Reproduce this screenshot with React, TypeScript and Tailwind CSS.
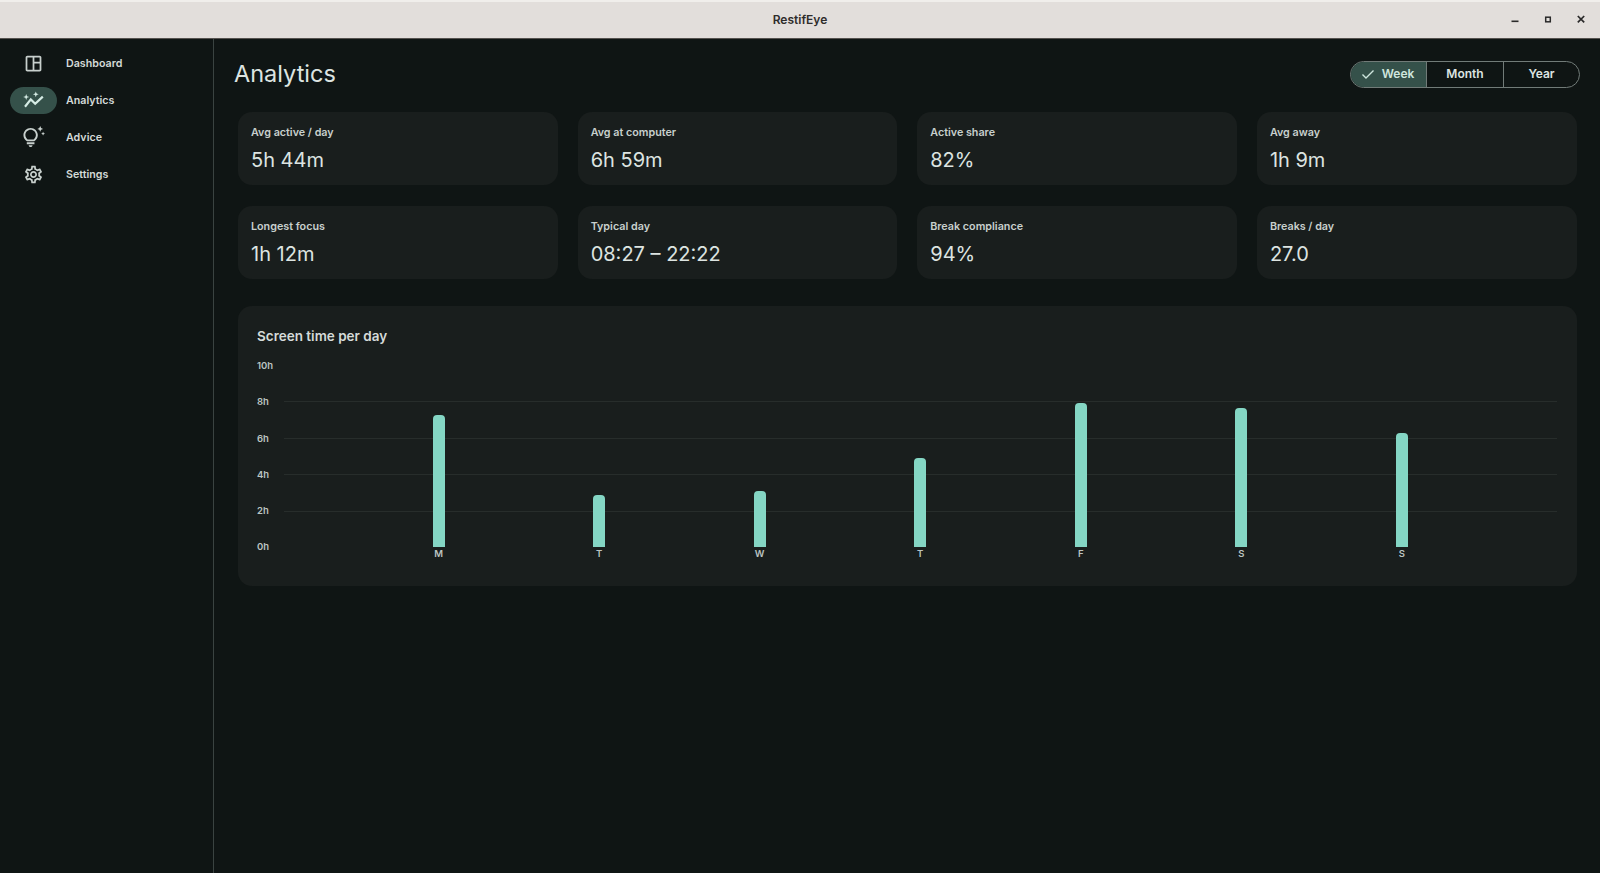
import {
  MdOutlineSettings,
  MdOutlineSpaceDashboard,
  MdOutlineTipsAndUpdates,
} from "react-icons/md";

function AnalyticsIcon({ size }: { size: number }) {
  return (
    <svg width={size} height={size} viewBox="0 0 24 24" fill="none" stroke="currentColor" className="-translate-x-[0.5px]">
      <path d="M3.5 17.8 L9.3 10.4 L13.7 14.8 L21.3 7.6" strokeWidth="2.2" />
      <path
        d="M4.7 5 L5.5 7.2 L7.7 8 L5.5 8.8 L4.7 11 L3.9 8.8 L1.7 8 L3.9 7.2 Z M14.3 2.4 L15.1 4.5 L17.2 5.3 L15.1 6.1 L14.3 8.2 L13.5 6.1 L11.4 5.3 L13.5 4.5 Z"
        fill="currentColor"
        stroke="none"
      />
    </svg>
  );
}

const navItems = [
  { label: "Dashboard", icon: MdOutlineSpaceDashboard, size: 21 },
  { label: "Analytics", icon: AnalyticsIcon, size: 24, active: true },
  { label: "Advice", icon: MdOutlineTipsAndUpdates, size: 23 },
  { label: "Settings", icon: MdOutlineSettings, size: 21 },
];

const stats = [
  { label: "Avg active / day", value: "5h 44m" },
  { label: "Avg at computer", value: "6h 59m" },
  { label: "Active share", value: "82%" },
  { label: "Avg away", value: "1h 9m" },
  { label: "Longest focus", value: "1h 12m" },
  { label: "Typical day", value: "08:27 – 22:22" },
  { label: "Break compliance", value: "94%" },
  { label: "Breaks / day", value: "27.0" },
];

const days = [
  { label: "M", height: 132 },
  { label: "T", height: 52.5 },
  { label: "W", height: 56 },
  { label: "T", height: 89 },
  { label: "F", height: 144 },
  { label: "S", height: 139 },
  { label: "S", height: 114.5 },
];

const ticks = ["10h", "8h", "6h", "4h", "2h", "0h"];

function TitleBar() {
  return (
    <div className="relative flex h-[39px] shrink-0 items-center justify-center border-b border-[#55524f] border-t-2 border-t-[#f0eeeb] bg-[#e2dedb]">
      <span className="text-[12px] font-semibold text-[#2e2c2b]">RestifEye</span>
      <div className="absolute right-[12px] top-[11px] flex items-center gap-[19px]">
        <svg width="14" height="14" viewBox="0 0 14 14" className="text-[#2a2a2a]">
          <rect x="3.5" y="7.5" width="7" height="1.6" fill="currentColor" />
        </svg>
        <svg width="14" height="14" viewBox="0 0 14 14" className="text-[#2a2a2a]">
          <rect x="4.7" y="4.2" width="4.6" height="4.6" fill="none" stroke="currentColor" strokeWidth="1.5" />
        </svg>
        <svg width="14" height="14" viewBox="0 0 14 14" className="text-[#2a2a2a]">
          <path d="M3.8 3 L10.2 9.4 M10.2 3 L3.8 9.4" fill="none" stroke="currentColor" strokeWidth="1.7" />
        </svg>
      </div>
    </div>
  );
}

function Sidebar() {
  return (
    <div className="flex w-[214px] shrink-0 flex-col border-r border-[#3a4341] pl-[10px] pt-[6.5px]">
      {navItems.map((item) => {
        const Icon = item.icon;
        return (
          <div key={item.label} className="flex h-[36.9px] items-center">
            <div
              className={`flex h-[27px] w-[47px] items-center justify-center rounded-full ${
                item.active ? "bg-[#35514a] text-[#d5ebe4]" : "text-[#c8d0cd]"
              }`}
            >
              <Icon size={item.size} />
            </div>
            <span className="ml-[10px] -translate-x-px text-[10.7px] font-semibold text-[#d4dad8]">{item.label}</span>
          </div>
        );
      })}
    </div>
  );
}

function PeriodToggle() {
  return (
    <div className="mt-[1px] flex h-[27px] w-[230px] overflow-hidden rounded-full border-[1.5px] border-[#717b78] text-[12px] font-semibold">
      <div className="flex w-[76px] items-center justify-center gap-[7px] border-r-[1.5px] border-[#717b78] bg-[#35514a] pr-[2px] text-[#cfe6de]">
        <svg width="14" height="14" viewBox="0 0 14 14">
          <path d="M1.5 7.5 L5 11 L12.5 3.5" fill="none" stroke="currentColor" strokeWidth="1.4" />
        </svg>
        Week
      </div>
      <div className="flex w-[77px] items-center justify-center border-r-[1.5px] border-[#717b78] text-[#dde4e1]">Month</div>
      <div className="flex flex-1 items-center justify-center text-[#dde4e1]">Year</div>
    </div>
  );
}

function StatCard({ label, value }: { label: string; value: string }) {
  return (
    <div className="flex h-[73px] flex-col rounded-[14px] bg-[#191e1d] pl-[13px] pt-[13.5px]">
      <span className="text-[10.75px] font-semibold leading-[14px] text-[#c8d0cd]">{label}</span>
      <span className="mt-[6px] text-[20px] leading-[28px] text-[#dde4e1]">{value}</span>
    </div>
  );
}

function ScreenTimeChart() {
  return (
    <div className="mt-[27px] h-[280px] rounded-[14px] bg-[#191e1d] pl-[19px] pr-[20px] pt-[20px]">
      <h2 className="text-[13.5px] font-semibold leading-[20px] text-[#d5dbd9]">Screen time per day</h2>
      <div className="mt-[14px] flex">
        <div className="flex h-[193.5px] w-[27px] shrink-0 flex-col justify-between text-[9.5px] font-semibold leading-[12px] text-[#bcc5c2]">
          {ticks.map((tick) => (
            <span key={tick}>{tick}</span>
          ))}
        </div>
        <div className="relative mt-[6px] h-[181px] flex-1">
          {/* grid lines sit behind the bars */}
          <div className="flex h-full flex-col justify-between">
            <div />
            {ticks.slice(1, 5).map((tick) => (
              <div key={tick} className="h-px bg-[#272d2b]" />
            ))}
            <div />
          </div>
          <div className="absolute inset-0 flex items-end justify-evenly">
            {days.map((day, i) => (
              <div key={i} className="relative w-[12px]">
                <div className="rounded-t-[4px] bg-[#84d6c4]" style={{ height: day.height }} />
                <span className="absolute left-1/2 top-full mt-px -translate-x-1/2 text-[9.5px] font-semibold leading-[12px] text-[#bcc5c2]">
                  {day.label}
                </span>
              </div>
            ))}
          </div>
        </div>
      </div>
    </div>
  );
}

export default function App() {
  return (
    <div className="flex h-screen flex-col overflow-hidden bg-[#0f1514] font-['Inter',sans-serif]">
      <TitleBar />
      <div className="flex min-h-0 flex-1">
        <Sidebar />
        <div className="flex-1 pl-[24px] pr-[23.5px] pt-[21px]">
          <div className="ml-[-4px] mr-[-3.5px] flex h-[27px] items-center justify-between">
            <h1 className="text-[23.5px] text-[#dde4e1]">Analytics</h1>
            <PeriodToggle />
          </div>
          <div className="mt-[25px] grid grid-cols-4 gap-x-[20px] gap-y-[21px]">
            {stats.map((stat) => (
              <StatCard key={stat.label} label={stat.label} value={stat.value} />
            ))}
          </div>
          <ScreenTimeChart />
        </div>
      </div>
    </div>
  );
}
